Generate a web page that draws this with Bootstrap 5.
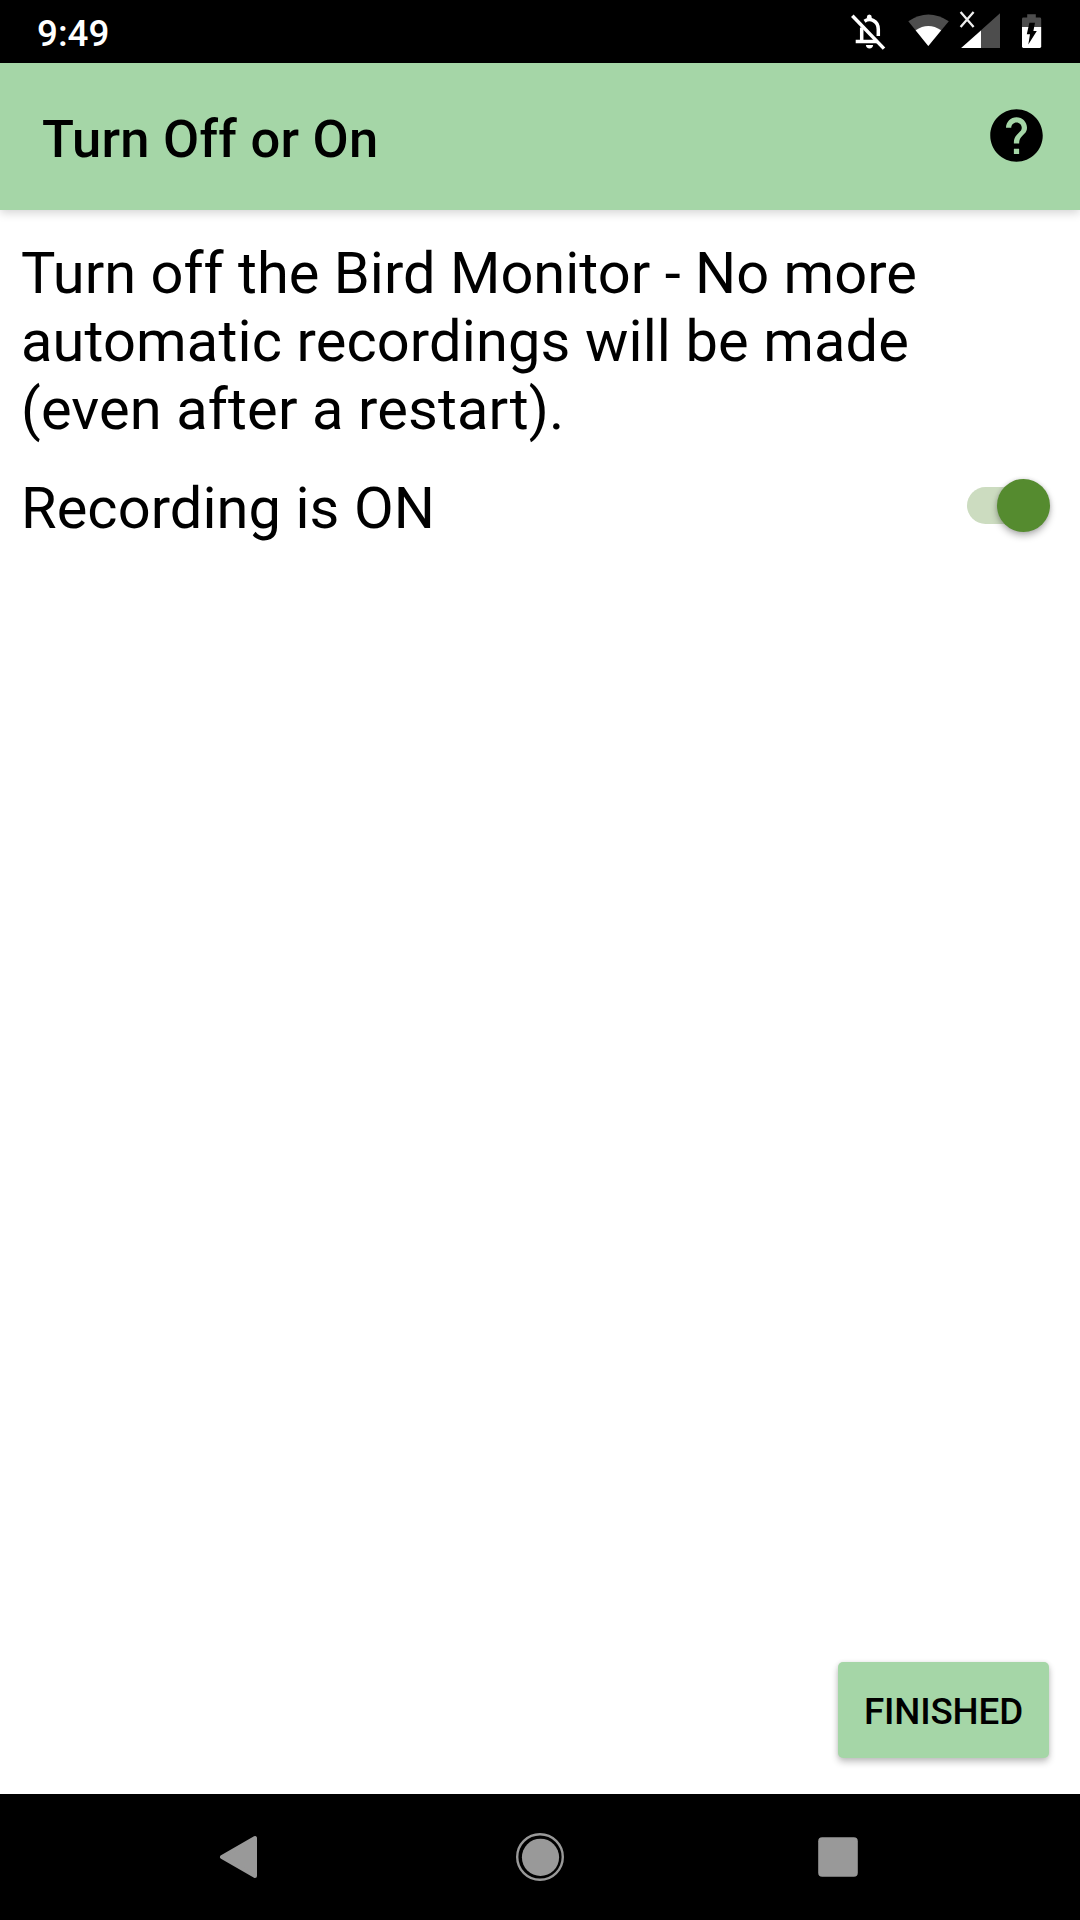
<!DOCTYPE html>
<html lang="en">
<head>
<meta charset="utf-8">
<meta name="viewport" content="width=device-width, initial-scale=1">
<title>Turn Off or On</title>
<link href="https://cdn.jsdelivr.net/npm/bootstrap@5.3.0/dist/css/bootstrap.min.css" rel="stylesheet">
<style>
  body { font-family: Roboto, "Noto Sans", sans-serif; color: #000; background: #fff; }
  .screen { height: 1920px; width: 1080px; }
  .status-bar { height: 63px; padding: 12px 30px 0 37px; }
  .clock { font-size: 36.75px; line-height: 43px; font-weight: 500; }
  .status-icons { margin-top: -12px; }
  .app-bar { height: 147px; padding: 0 32px 0 42px; background: #a5d6a7; box-shadow: 0 3px 9px rgba(0,0,0,.17); z-index: 1; }
  .app-title { font-size: 52.5px; line-height: 62px; font-weight: 500; padding-top: 4px; letter-spacing: .25px; }
  .help-btn { margin-bottom: 2px; }
  .page-body { padding: 29px 31px 36px 21px; }
  .body-text { font-size: 57.75px; line-height: 68px; letter-spacing: .08px; }
  .intro { margin-bottom: 31px; }
  .intro-first { letter-spacing: .03px; }
  .intro-rest { letter-spacing: .14px; }
  .toggle { width: 82px; height: 53px; margin-bottom: 6px; }
  .toggle-track { width: 68px; height: 37px; border-radius: 19px; background: #ccdcc0; }
  .toggle-thumb { width: 53px; height: 53px; right: -1px; top: 0; background: #558b2f; box-shadow: 0 4px 7px rgba(0,0,0,.27), 0 0 4px rgba(0,0,0,.14); }
  .finish-btn { width: 211px; height: 96px; padding: 2px 0 0; border: 0; border-radius: 5px; background: #a5d6a7; color: #000; font-size: 36.75px; line-height: 43px; font-weight: 500; letter-spacing: -.15px; box-shadow: 0 4px 7px rgba(0,0,0,.24), 0 0 4px rgba(0,0,0,.08); }
  .nav-keys { height: 126px; }
</style>
</head>
<body>
<div class="screen d-flex flex-column overflow-hidden">
  <header class="status-bar bg-black text-white d-flex justify-content-between flex-shrink-0">
    <span class="clock">9:49</span>
    <div class="status-icons d-flex">
      <svg width="50" height="63" viewBox="844 0 50 63" fill="none" stroke="#fff" stroke-width="3.5">
        <path d="M852.3 15.7L884 48.6"/>
        <path d="M861.7 27.5V41.3M855.7 41.5H877.5"/>
        <path d="M864.5 21.2C870 17.6 878.3 20.5 878.3 29.5V36"/>
        <path d="M866.9 18V17Q866.9 14.5 869.3 14.5T871.7 17V19Z" fill="#fff" stroke="none"/>
        <path d="M865.9 45H873.1Q872.8 48.4 869.5 48.4T865.9 45Z" fill="#fff" stroke="none"/>
      </svg>
      <svg width="64" height="63" viewBox="894 0 64 63">
        <path d="M928.3 46L908.3 21.2Q928.3 7.8 948.8 21.2Z" fill="#4d4d4d"/>
        <path d="M928.3 46L915.6 30.3Q928.3 21.5 941.2 30.3Z" fill="#fff"/>
      </svg>
      <svg width="54" height="63" viewBox="958 0 54 63">
        <path d="M1000 13.3V48H961.2Z" fill="#4d4d4d"/>
        <path d="M981 30.5V48H961.2Z" fill="#fff"/>
        <path d="M960.6 12L973.6 27M973.6 12L960.6 27" stroke="#eee" stroke-width="2.3"/>
      </svg>
      <svg width="38" height="63" viewBox="1012 0 38 63">
        <path d="M1022 27V19Q1022 17.6 1023.4 17.6H1027.2V14.2H1035.8V17.6H1039.8Q1041.2 17.6 1041.2 19V27Z" fill="#4d4d4d"/>
        <path d="M1022 27H1041.2V46.6Q1041.2 48 1039.8 48H1023.4Q1022 48 1022 46.6Z" fill="#fff"/>
        <path d="M1029.4 22.8H1035L1033.4 31H1036.8L1028.3 44.6L1030 34.3H1026.8Z" fill="#000"/>
      </svg>
    </div>
  </header>

  <nav class="app-bar d-flex align-items-center justify-content-between flex-shrink-0 position-relative">
    <h1 class="app-title m-0">Turn Off or On</h1>
    <button class="help-btn btn p-0 border-0 d-flex" aria-label="Help">
      <svg width="63" height="63" viewBox="0 0 24 24"><path d="M12 2C6.48 2 2 6.48 2 12s4.48 10 10 10 10-4.48 10-10S17.52 2 12 2zm1 17h-2v-2h2v2zm2.07-7.75l-.9.92C13.45 12.9 13 13.5 13 15h-2v-.5c0-1.1.45-2.1 1.17-2.83l1.24-1.26c.37-.36.59-.86.59-1.41 0-1.1-.9-2-2-2s-2 .9-2 2H8c0-2.21 1.79-4 4-4s4 1.79 4 4c0 .88-.36 1.68-.93 2.25z"/></svg>
    </button>
  </nav>

  <main class="page-body d-flex flex-column flex-grow-1">
    <p class="body-text intro"><span class="intro-first">Turn off the Bird Monitor - No more</span><br><span class="intro-rest">automatic recordings will be made<br>(even after a restart).</span></p>
    <div class="d-flex align-items-center justify-content-between">
      <span class="body-text">Recording is ON</span>
      <div class="toggle position-relative d-flex align-items-center" role="switch" aria-checked="true" aria-label="Recording">
        <div class="toggle-track"></div>
        <div class="toggle-thumb rounded-circle position-absolute"></div>
      </div>
    </div>
    <button class="finish-btn btn mt-auto align-self-end">FINISHED</button>
  </main>

  <footer class="nav-keys bg-black d-flex justify-content-center flex-shrink-0">
    <svg width="300" height="126" viewBox="90 1794 300 126"><path d="M222 1857L255 1838V1876Z" fill="#999" stroke="#999" stroke-width="4" stroke-linejoin="round"/></svg>
    <svg width="300" height="126" viewBox="390 1794 300 126"><circle cx="540" cy="1857" r="22.8" fill="none" stroke="#999" stroke-width="2.4"/><circle cx="540.5" cy="1857.3" r="18.6" fill="#999"/></svg>
    <svg width="300" height="126" viewBox="690 1794 300 126"><rect x="818.2" y="1837.2" width="39.6" height="39.6" rx="4" fill="#999"/></svg>
  </footer>
</div>
<script src="https://cdn.jsdelivr.net/npm/bootstrap@5.3.0/dist/js/bootstrap.bundle.min.js"></script>
</body>
</html>
